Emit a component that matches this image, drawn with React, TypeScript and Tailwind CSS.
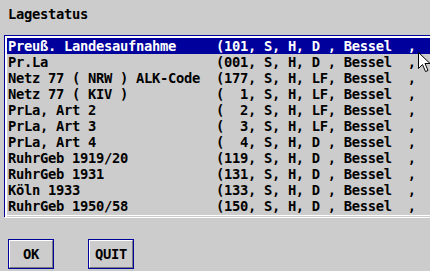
import React from "react";

const rows: [string, string][] = [
  ["Preuß. Landesaufnahme", "(101, S, H, D , Bessel  ,"],
  ["Pr.La", "(001, S, H, D , Bessel  ,"],
  ["Netz 77 ( NRW ) ALK-Code", "(177, S, H, LF, Bessel  ,"],
  ["Netz 77 ( KIV )", "(  1, S, H, LF, Bessel  ,"],
  ["PrLa, Art 2", "(  2, S, H, LF, Bessel  ,"],
  ["PrLa, Art 3", "(  3, S, H, LF, Bessel  ,"],
  ["PrLa, Art 4", "(  4, S, H, D , Bessel  ,"],
  ["RuhrGeb 1919/20", "(119, S, H, D , Bessel  ,"],
  ["RuhrGeb 1931", "(131, S, H, D , Bessel  ,"],
  ["Köln 1933", "(133, S, H, D , Bessel  ,"],
  ["RuhrGeb 1950/58", "(150, S, H, D , Bessel  ,"],
];

function Button({ label }: { label: string }) {
  return (
    <div className="w-[46px] h-[30px] border border-[#00009c]">
      <div className="w-full h-full border-t border-l border-white border-b border-r border-b-[#7a7a7a] border-r-[#7a7a7a] flex items-center justify-center text-black font-bold leading-[17px]">
        {label}
      </div>
    </div>
  );
}

export default function App() {
  return (
    <div
      className="relative w-[430px] h-[271px] overflow-hidden bg-[#cccccc] text-[13.8px] tracking-[-0.31px]"
      style={{ fontFamily: '"DejaVu Sans Mono", "Liberation Mono", monospace' }}
    >
      <div className="pt-[6px] pl-[8px] leading-[17px] font-bold text-black">Lagestatus</div>
      <div className="mt-[12px] ml-[4px] w-[600px] border-l border-t border-[#00009c]">
        <div className="border-l-2 border-t-2 border-white">
          {rows.map(([a, b], i) => (
            <div
              key={i}
              className={
                i === 0
                  ? "h-[16px] leading-[17px] whitespace-pre pl-[1px] font-bold bg-[#00009c] text-white"
                  : "h-[16px] leading-[17px] whitespace-pre pl-[1px] font-bold text-black"
              }
            >
              {a.padEnd(26, " ") + b}
            </div>
          ))}
          <div className="h-px" />
          <div className="h-px bg-white" />
          <div className="h-px" />
        </div>
      </div>
      <div className="h-px bg-white ml-[5px]" />
      <div className="mt-[21px] ml-[8px] flex gap-[34px]">
        <Button label="OK" />
        <Button label="QUIT" />
      </div>
      <svg
        className="absolute left-[418px] top-[52px]"
        width="13"
        height="21"
        viewBox="0 0 13 21"
      >
        <polygon
          points="0.5,0.5 0.5,16.5 4.5,12.5 7.5,19.5 10,18.5 7,11.5 12,11.5"
          fill="white"
          stroke="black"
          strokeWidth="1"
        />
      </svg>
    </div>
  );
}
